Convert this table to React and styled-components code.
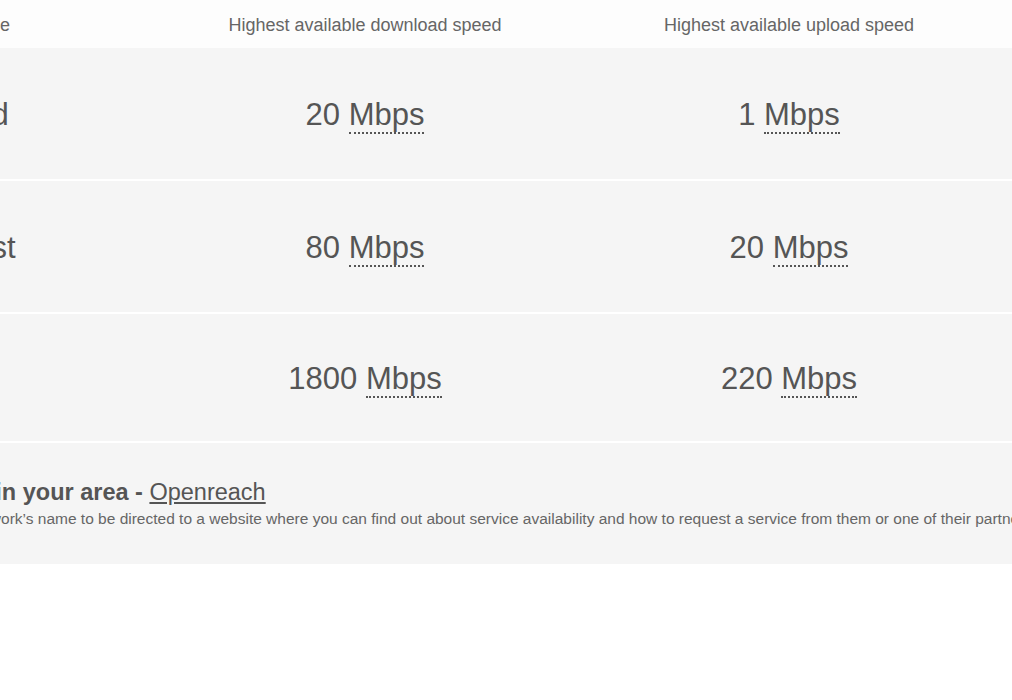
import React from 'react'
import styled, { createGlobalStyle } from 'styled-components'

const GlobalStyle = createGlobalStyle`
  html, body {
    margin: 0;
    padding: 0;
    background: #ffffff;
    overflow: hidden;
  }
  body {
    font-family: "Liberation Sans", Arial, sans-serif;
    color: #555555;
  }
`

const Page = styled.div`
  width: 1012px;
  height: 700px;
  overflow: hidden;
  background: #ffffff;
`

const SpeedTable = styled.div`
  margin-left: -147px;
  width: 1400px;
`

const Row = styled.div`
  display: grid;
  grid-template-columns: 300px 424px 424px 1fr;
  align-items: center;
  height: ${props => props.height}px;
  background: ${props => (props.head ? '#fdfdfd' : '#f5f5f5')};
  border-bottom: ${props => (props.head ? 'none' : '2px solid #ffffff')};
  box-sizing: content-box;
`

const HeadCell = styled.div`
  font-size: 18px;
  color: #666666;
  text-align: ${props => (props.left ? 'left' : 'center')};
  padding-left: ${props => (props.left ? '30px' : '0')};
  padding-top: 2px;
`

const LabelCell = styled.div`
  font-size: 31px;
  color: #555555;
  padding-left: 30px;
  padding-top: 3px;
`

const ValueCell = styled.div`
  font-size: 31px;
  color: #555555;
  text-align: center;
  padding-top: 3px;
`

const Unit = styled.abbr`
  text-decoration: none;
  border-bottom: 2px dotted #555555;
  cursor: help;
`

const Footer = styled.div`
  background: #f5f5f5;
  height: 121px;
  padding: 36px 0 0 30px;
  box-sizing: border-box;
`

const FooterTitle = styled.h2`
  margin: 0;
  font-size: 23.5px;
  font-weight: bold;
  color: #555555;
  line-height: 27px;
`

const FooterLink = styled.a`
  font-weight: normal;
  color: #555555;
  text-decoration: underline;
`

const FooterNote = styled.p`
  margin: 4px 0 0;
  font-size: 15.5px;
  color: #666666;
  line-height: 18px;
  white-space: nowrap;
`

const speeds = [
  { type: 'Standard', down: '20', up: '1', height: 131 },
  { type: 'Superfast', down: '80', up: '20', height: 131 },
  { type: 'Ultrafast', down: '1800', up: '220', height: 127 },
]

const Speed = ({ value }) => (
  <ValueCell>
    {value} <Unit title="Megabits per second">Mbps</Unit>
  </ValueCell>
)

export default function App() {
  return (
    <Page>
      <GlobalStyle />
      <SpeedTable>
        <Row head height={48}>
          <HeadCell left>Broadband type</HeadCell>
          <HeadCell>Highest available download speed</HeadCell>
          <HeadCell>Highest available upload speed</HeadCell>
          <div />
        </Row>
        {speeds.map(s => (
          <Row key={s.type} height={s.height}>
            <LabelCell>{s.type}</LabelCell>
            <Speed value={s.down} />
            <Speed value={s.up} />
            <div />
          </Row>
        ))}
        <Footer>
          <FooterTitle>
            Networks in your area - <FooterLink href="#">Openreach</FooterLink>
          </FooterTitle>
          <FooterNote>
            Click on the network’s name to be directed to a website where you can find out about service availability and how to request a service from them or one of their partners.
          </FooterNote>
        </Footer>
      </SpeedTable>
    </Page>
  )
}
